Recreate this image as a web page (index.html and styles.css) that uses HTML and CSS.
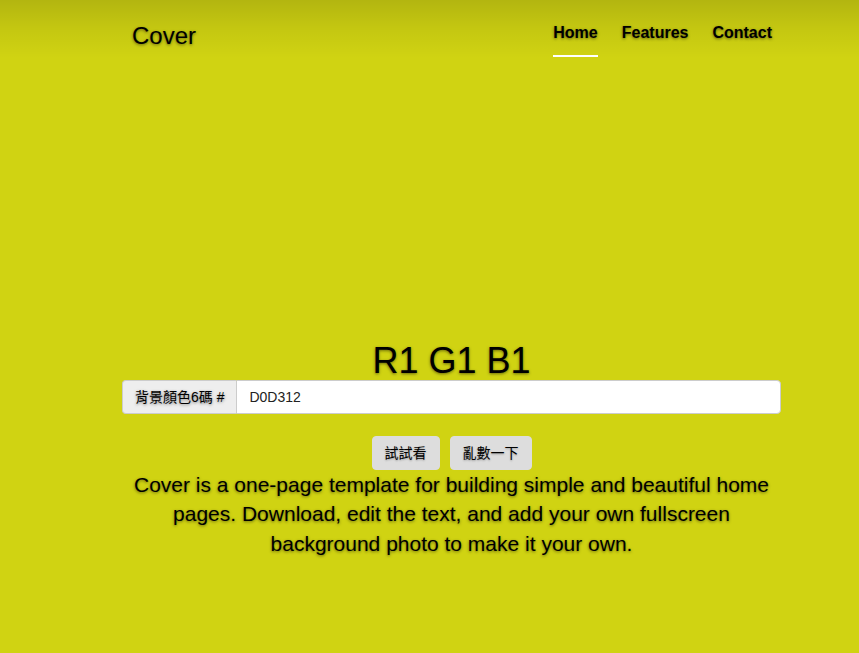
FILE: index.html
```html
<!DOCTYPE html>
<html lang="zh-Hant">
<head>
<meta charset="utf-8">
<title>Cover</title>
<link rel="stylesheet" href="styles.css">
</head>
<body>
<div class="page">
  <div class="cover">
    <header class="masthead">
      <h3 class="brand">Cover</h3>
      <nav class="nav">
        <a class="nav-link active" href="#">Home</a>
        <a class="nav-link" href="#">Features</a>
        <a class="nav-link" href="#">Contact</a>
      </nav>
    </header>
    <main class="inner">
      <h1 class="title">R1 G1 B1</h1>
      <div class="input-group">
        <span class="addon">背景顏色6碼 #</span>
        <input class="field" type="text" value="D0D312">
      </div>
      <div class="actions">
        <button class="btn" type="button">試試看</button>
        <button class="btn" type="button">亂數一下</button>
      </div>
      <p class="lead">Cover is a one-page template for building simple and beautiful home pages. Download, edit the text, and add your own fullscreen background photo to make it your own.</p>
    </main>
  </div>
</div>
</body>
</html>
```
FILE: styles.css
```css
html, body {
  margin: 0;
  padding: 0;
}
body {
  background: #D0D312;
  color: #000;
  font-family: "Liberation Sans", Arial, "Noto Sans CJK TC", sans-serif;
  font-size: 14px;
  line-height: 1.43;
  text-shadow: 0 1px 3px rgba(0, 0, 0, 0.5);
  min-height: 653px;
}
.page {
  min-height: 653px;
  background: linear-gradient(to bottom, rgba(0, 0, 0, 0.14) 0, rgba(0, 0, 0, 0.06) 28px, rgba(0, 0, 0, 0) 58px);
  overflow: hidden;
}
.cover {
  margin-left: 122px;
  width: 659px;
}
.masthead {
  display: flex;
  justify-content: space-between;
  align-items: flex-start;
  padding: 0 9px 0 10px;
}
.brand {
  margin: 23px 0 0;
  font-size: 24px;
  font-weight: normal;
  line-height: 26px;
}
.nav {
  display: flex;
  gap: 24px;
  padding-top: 21px;
}
.nav-link {
  display: block;
  color: #000;
  text-decoration: none;
  font-size: 16px;
  font-weight: bold;
  line-height: 24px;
  padding: 0 0 10px;
  border-bottom: 2px solid transparent;
}
.nav-link.active {
  border-bottom-color: #fff;
}
.inner {
  padding-top: 285px;
  text-align: center;
}
.title {
  margin: 0;
  font-size: 36px;
  font-weight: normal;
  line-height: 38px;
}
.input-group {
  display: flex;
  height: 34px;
  text-align: left;
}
.addon {
  box-sizing: border-box;
  padding: 6px 12px;
  background: #eee;
  border: 1px solid #ccc;
  border-right: 0;
  border-radius: 4px 0 0 4px;
  font-size: 14px;
  line-height: 20px;
  white-space: nowrap;
}
.field {
  flex: 1;
  box-sizing: border-box;
  height: 34px;
  margin: 0;
  padding: 6px 12px;
  border: 1px solid #ccc;
  border-radius: 0 4px 4px 0;
  background: #fff;
  color: #222;
  font-family: "Liberation Sans", Arial, sans-serif;
  font-size: 14px;
  line-height: 20px;
  outline: none;
}
.actions {
  display: flex;
  justify-content: center;
  gap: 10px;
  margin-top: 22px;
}
.btn {
  box-sizing: border-box;
  height: 34px;
  padding: 6px 12px;
  border: 1px solid #ddd;
  border-radius: 4px;
  background: #ddd;
  color: #000;
  font-family: "Liberation Sans", Arial, "Noto Sans CJK TC", sans-serif;
  font-size: 14px;
  line-height: 20px;
  text-shadow: 0 1px 2px rgba(0, 0, 0, 0.3);
}
.lead {
  margin: 0;
  font-size: 21px;
  line-height: 29.4px;
}
```
